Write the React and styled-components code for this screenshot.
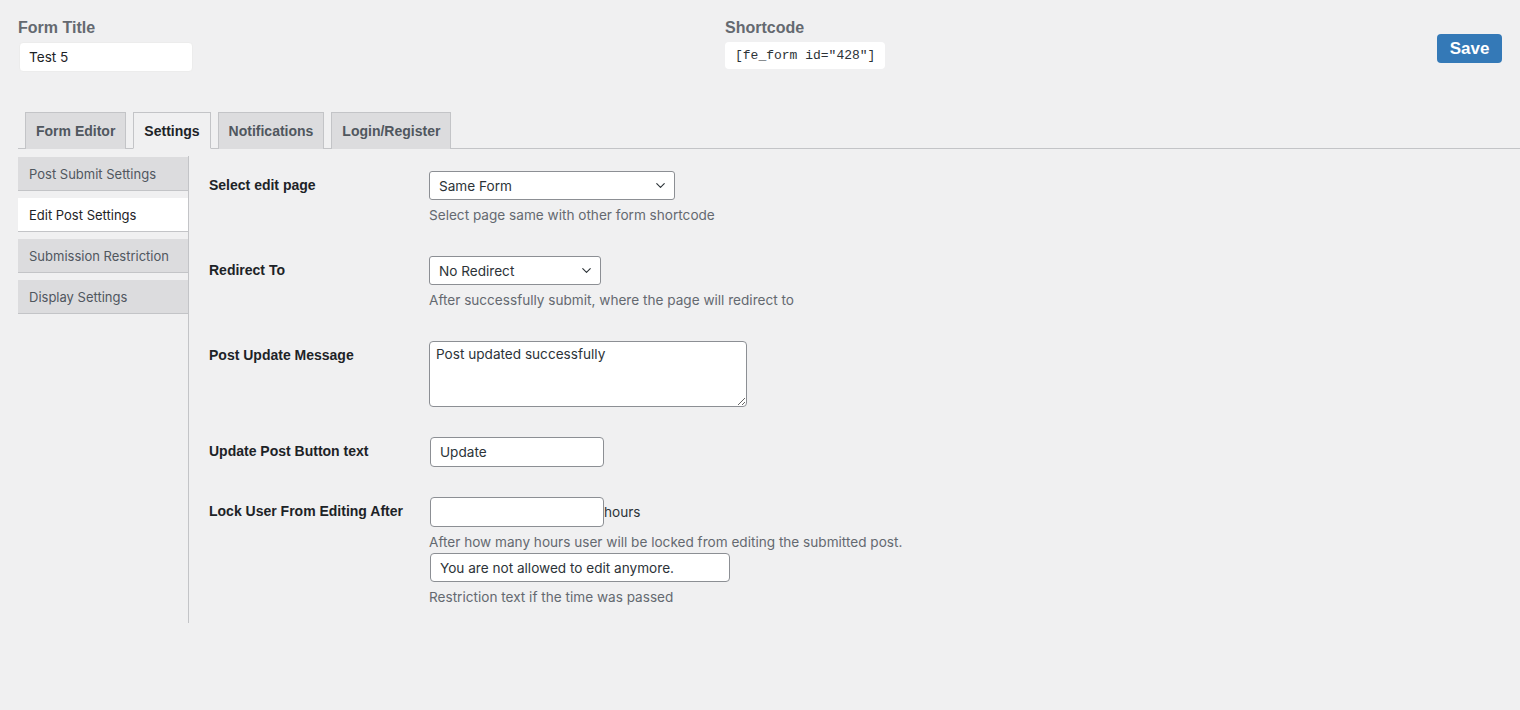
import React from "react"
import styled, { createGlobalStyle } from "styled-components"
import { ChevronDown } from "lucide-react"

const GlobalStyle = createGlobalStyle`
  html, body {
    margin: 0;
    padding: 0;
    background: #f0f0f1;
    font-family: Inter, "Liberation Sans", Arial, sans-serif;
    color: #1d2327;
  }
  * { box-sizing: border-box; }
`

const bold = `"Liberation Sans", Arial, sans-serif`
const regular = `13.6px Inter, "Liberation Sans", Arial, sans-serif`

const Page = styled.div`
  min-height: 710px;
  padding-top: 18px;
`

const Header = styled.div`
  display: grid;
  grid-template-columns: 707px 1fr auto;
  align-items: start;
  padding: 0 18px;
`

const Field = styled.div`
  display: flex;
  flex-direction: column;
  gap: 5px;
`

const HeadLabel = styled.div`
  font-family: ${bold};
  font-size: 16px;
  font-weight: 700;
  color: #646970;
  line-height: 19px;
`

const TitleInput = styled.input`
  width: 174px;
  height: 30px;
  margin-left: 1px;
  border: 1px solid #ececec;
  border-radius: 4px;
  background: #fff;
  padding: 0 9px;
  font: ${regular};
  color: #1d2327;
  outline: none;
`

const Code = styled.code`
  display: inline-block;
  align-self: flex-start;
  background: #fff;
  border-radius: 4px;
  padding: 0 10px;
  height: 27px;
  font: 13px/27px "Liberation Mono", "DejaVu Sans Mono", monospace;
  color: #2c3338;
`

const SaveButton = styled.button`
  margin-top: 16px;
  width: 65px;
  height: 29px;
  border: none;
  border-radius: 4px;
  background: #3479b7;
  color: #fff;
  font: 700 17px ${bold};
  cursor: pointer;
`

const Tabs = styled.div`
  display: flex;
  gap: 7px;
  margin: 40px 0 0 18px;
  padding-left: 7px;
  border-bottom: 1px solid #c3c4c7;
  height: 37px;
`

const Tab = styled.div`
  height: 37px;
  padding: 0 10px;
  display: flex;
  align-items: center;
  font-family: ${bold};
  font-size: 14px;
  font-weight: 700;
  border: 1px solid #c3c4c7;
  border-bottom: ${p => (p.$active ? "1px solid #f0f0f1" : "none")};
  background: ${p => (p.$active ? "#f0f0f1" : "#dcdcde")};
  color: ${p => (p.$active ? "#1d2327" : "#50575e")};
`

const Body = styled.div`
  display: flex;
  padding-left: 18px;
  margin-top: 7px;
`

const Sidebar = styled.div`
  width: 170px;
  display: flex;
  flex-direction: column;
  gap: 7px;
  padding-top: 1px;
`

const SideItem = styled.div`
  height: 34px;
  display: flex;
  align-items: center;
  padding: 1px 0 0 11px;
  font-size: 13px;
  background: ${p => (p.$active ? "#fff" : "#dcdcde")};
  color: ${p => (p.$active ? "#1d2327" : "#50575e")};
  border-bottom: 1px solid #c3c4c7;
`

const Content = styled.div`
  border-left: 1px solid #c3c4c7;
  padding-left: 20px;
  min-height: 466px;
  flex: 1;
`

const Row = styled.div`
  display: grid;
  grid-template-columns: 210px 1fr;
`

const Label = styled.div`
  padding: 20px 10px 20px 0;
  font-family: ${bold};
  font-size: 14px;
  font-weight: 700;
  line-height: 18px;
`

const Cell = styled.div`
  padding: 15px 10px;
  display: flex;
  flex-direction: column;
  align-items: flex-start;
`

const Inline = styled.div`
  display: flex;
  align-items: center;
  font: ${regular};
  color: #2c3338;
  margin-left: 1px;
`

const Desc = styled.p`
  margin: 5px 0 0;
  font: ${regular};
  line-height: 21px;
  color: #646970;
`

const SelectWrap = styled.div`
  position: relative;
  width: ${p => p.$w}px;
`

const Select = styled.select`
  appearance: none;
  width: 100%;
  height: 29px;
  border: 1px solid #8c8f94;
  border-radius: 3px;
  background: #fff;
  padding: 0 24px 0 9px;
  font: ${regular};
  color: #2c3338;
  outline: none;
`

const Chevron = styled(ChevronDown)`
  position: absolute;
  right: 7px;
  top: 7px;
  pointer-events: none;
  color: #2c3338;
`

const TextInput = styled.input`
  width: ${p => p.$w}px;
  height: ${p => p.$h || 30}px;
  border: 1px solid #8c8f94;
  border-radius: 4px;
  background: #fff;
  padding: 0 9px;
  font: ${regular};
  color: #2c3338;
  outline: none;
`

const TextArea = styled.textarea`
  width: 318px;
  height: 66px;
  border: 1px solid #8c8f94;
  border-radius: 4px;
  background: #fff;
  padding: 3px 6px;
  font: ${regular};
  line-height: 18px;
  color: #2c3338;
  outline: none;
`

const tabs = ["Form Editor", "Settings", "Notifications", "Login/Register"]
const sideItems = ["Post Submit Settings", "Edit Post Settings", "Submission Restriction", "Display Settings"]

const App = () => {
  return (
    <>
      <GlobalStyle />
      <Page>
        <Header>
          <Field>
            <HeadLabel>Form Title</HeadLabel>
            <TitleInput defaultValue="Test 5" />
          </Field>
          <Field>
            <HeadLabel>Shortcode</HeadLabel>
            <Code>[fe_form id="428"]</Code>
          </Field>
          <SaveButton>Save</SaveButton>
        </Header>

        <Tabs>
          {tabs.map(t => (
            <Tab key={t} $active={t === "Settings"}>{t}</Tab>
          ))}
        </Tabs>

        <Body>
          <Sidebar>
            {sideItems.map(s => (
              <SideItem key={s} $active={s === "Edit Post Settings"}>{s}</SideItem>
            ))}
          </Sidebar>

          <Content>
            <Row>
              <Label>Select edit page</Label>
              <Cell>
                <SelectWrap $w={246}>
                  <Select defaultValue="same">
                    <option value="same">Same Form</option>
                  </Select>
                  <Chevron size={15} strokeWidth={1.8} />
                </SelectWrap>
                <Desc>Select page same with other form shortcode</Desc>
              </Cell>
            </Row>

            <Row>
              <Label>Redirect To</Label>
              <Cell>
                <SelectWrap $w={172}>
                  <Select defaultValue="none">
                    <option value="none">No Redirect</option>
                  </Select>
                  <Chevron size={15} strokeWidth={1.8} />
                </SelectWrap>
                <Desc>After successfully submit, where the page will redirect to</Desc>
              </Cell>
            </Row>

            <Row>
              <Label>Post Update Message</Label>
              <Cell>
                <TextArea defaultValue="Post updated successfully" />
              </Cell>
            </Row>

            <Row>
              <Label>Update Post Button text</Label>
              <Cell>
                <Inline>
                  <TextInput $w={174} defaultValue="Update" />
                </Inline>
              </Cell>
            </Row>

            <Row>
              <Label>Lock User From Editing After</Label>
              <Cell>
                <Inline>
                  <TextInput $w={174} />
                  hours
                </Inline>
                <Desc>After how many hours user will be locked from editing the submitted post.</Desc>
                <Inline>
                  <TextInput $w={300} $h={29} defaultValue="You are not allowed to edit anymore." />
                </Inline>
                <Desc>Restriction text if the time was passed</Desc>
              </Cell>
            </Row>
          </Content>
        </Body>
      </Page>
    </>
  )
}

export default App
